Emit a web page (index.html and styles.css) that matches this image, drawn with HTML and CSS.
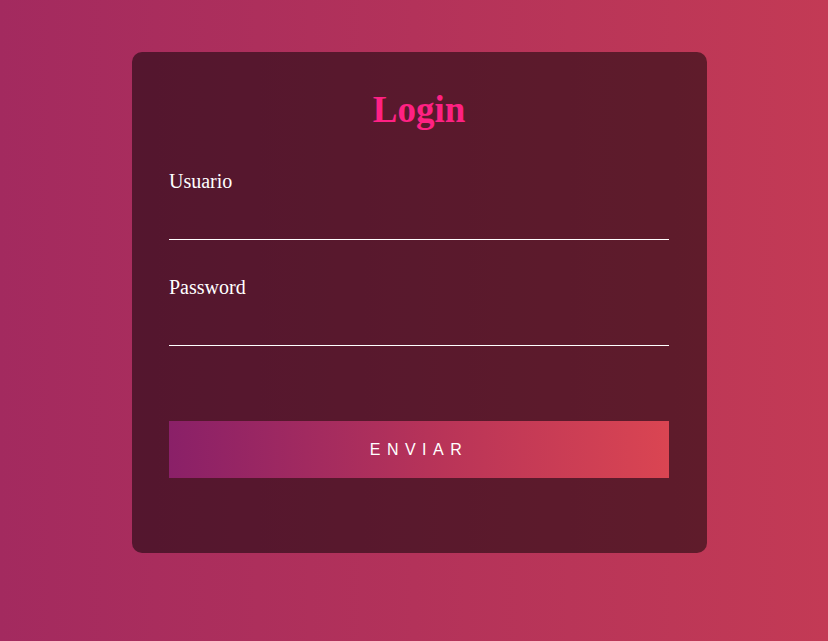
FILE: index.html
```html
<!DOCTYPE html>
<html lang="es">
<head>
<meta charset="utf-8">
<title>Login</title>
<link rel="stylesheet" href="styles.css">
</head>
<body>
<div class="page">
  <form class="card">
    <h1 class="title">Login</h1>
    <div class="field">
      <label class="label" for="u">Usuario</label>
      <input class="input" id="u" type="text">
    </div>
    <div class="field field-next">
      <label class="label" for="p">Password</label>
      <input class="input" id="p" type="password">
    </div>
    <button class="submit" type="button">ENVIAR</button>
  </form>
</div>
</body>
</html>
```

FILE: styles.css
```css
html, body {
  margin: 0;
  padding: 0;
}
body {
  height: 641px;
  background: linear-gradient(to right, #a32a5f, #c33a55);
  font-family: "Liberation Serif", "Times New Roman", serif;
  overflow: hidden;
}
.page {
  padding: 52px 0 0 132px;
}
.card {
  box-sizing: border-box;
  width: 575px;
  padding: 37px 38px 75px 37px;
  background: rgba(0, 0, 0, 0.5);
  border-radius: 10px;
  display: flex;
  flex-direction: column;
}
.title {
  margin: 0 0 40px;
  font-size: 37px;
  line-height: 41px;
  font-weight: bold;
  color: #ff2183;
  text-align: center;
}
.field {
  display: flex;
  flex-direction: column;
}
.field-next {
  margin-top: 36px;
}
.label {
  font-size: 20px;
  line-height: 23px;
  color: #ffffff;
}
.input {
  box-sizing: border-box;
  width: 500px;
  height: 47px;
  margin: 0;
  padding: 0;
  background: transparent;
  border: none;
  border-bottom: 1px solid #ffffff;
  outline: none;
  color: #ffffff;
  font-size: 16px;
}
.submit {
  margin-top: 75px;
  width: 500px;
  height: 57px;
  border: none;
  padding: 0;
  background: linear-gradient(to right, #8a2068, #b93458 55%, #da4552);
  color: #ffffff;
  font-family: "Liberation Sans", Arial, sans-serif;
  font-size: 16px;
  letter-spacing: 6.5px;
  text-align: center;
  cursor: pointer;
}
```
